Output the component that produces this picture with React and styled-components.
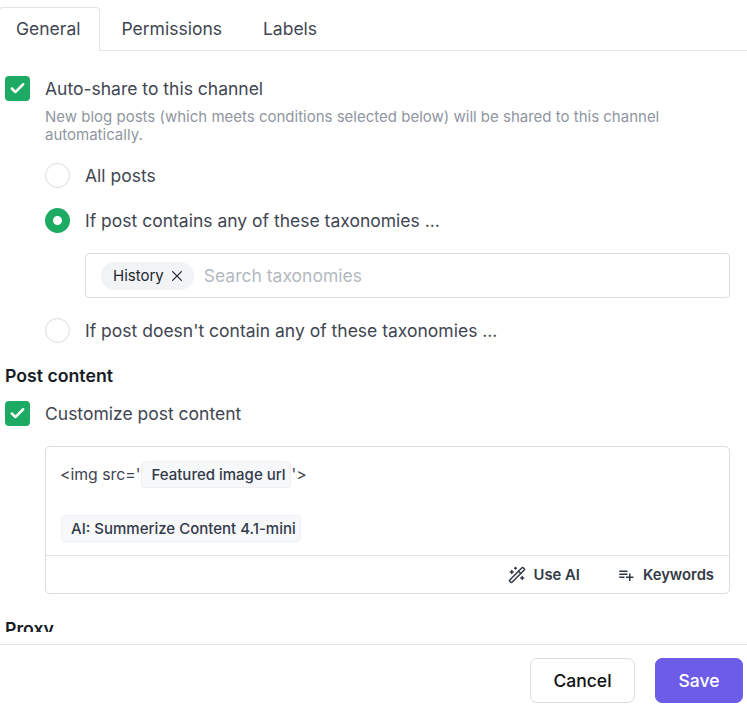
import React from "react";
import styled, { createGlobalStyle } from "styled-components";
import { Check, WandSparkles } from "lucide-react";
import { MdPlaylistAdd } from "react-icons/md";
import { IoCloseOutline } from "react-icons/io5";

const GlobalStyle = createGlobalStyle`
  html, body {
    margin: 0;
    padding: 0;
    height: 708px;
    overflow: hidden;
    background: #fff;
    font-family: Inter, "Liberation Sans", sans-serif;
  }
  * { box-sizing: border-box; }
`;

const Page = styled.div`
  display: flex;
  flex-direction: column;
  height: 708px;
`;

const Tabs = styled.div`
  display: flex;
  flex-shrink: 0;
  height: 51px;
  padding-top: 7px;
  border-bottom: 1px solid #e1e4e8;
`;

const Tab = styled.div`
  height: 44px;
  padding: 0 19px 0 ${({ $active }) => ($active ? "16px" : "20px")};
  margin-left: ${({ $active }) => ($active ? "-1px" : "0")};
  font-size: 17.5px;
  line-height: 42px;
  color: #3f4652;
  background: ${({ $active }) => ($active ? "#fff" : "transparent")};
  border: 1px solid ${({ $active }) => ($active ? "#e1e4e8" : "transparent")};
  border-bottom-color: ${({ $active }) => ($active ? "#fff" : "transparent")};
  border-radius: 4px 4px 0 0;
`;

const Content = styled.div`
  flex-shrink: 0;
  height: 581px;
  overflow: hidden;
  padding: 25px 17px 0 5px;
`;

const CheckRow = styled.div`
  display: flex;
  align-items: center;
  gap: 15px;
  height: 25px;
`;

const CheckBox = styled.span`
  display: flex;
  align-items: center;
  justify-content: center;
  width: 25px;
  height: 25px;
  border-radius: 4px;
  background: #1dab63;
  color: #fff;
`;

const Label = styled.span`
  font-size: 17.5px;
  color: #3f4652;
`;

const Description = styled.p`
  margin: 7px 0 0 40px;
  font-size: 15px;
  line-height: 18px;
  color: #8f96a1;
`;

const RadioList = styled.div`
  display: flex;
  flex-direction: column;
  margin: ${({ $top }) => $top}px 0 0 40px;
`;

const RadioRow = styled.div`
  display: flex;
  align-items: center;
  gap: 15px;
  height: 25px;
  margin-bottom: ${({ $gap }) => $gap}px;
`;

const Radio = styled.span`
  width: 25px;
  height: 25px;
  border-radius: 50%;
  background: #fff;
  border: ${({ $checked }) =>
    $checked ? "8px solid #1dab63" : "1px solid #d9dce1"};
`;

const TaxonomyInput = styled.div`
  display: flex;
  align-items: center;
  gap: 10px;
  height: 45px;
  margin: 0 0 20px 80px;
  padding: 0 15px;
  border: 1px solid #d9dce1;
  border-radius: 4px;
`;

const Chip = styled.span`
  display: flex;
  align-items: center;
  gap: 3px;
  height: 28px;
  padding: 0 7px 0 12px;
  border-radius: 14px;
  background: #f1f3f5;
  font-size: 15px;
  color: #1f2630;
`;

const Placeholder = styled.span`
  font-size: 17.5px;
  color: #b4b9c1;
`;

const SectionTitle = styled.h3`
  margin: ${({ $top }) => $top}px 0 ${({ $bottom }) => $bottom}px;
  font-size: 17.7px;
  line-height: 21px;
  font-weight: 600;
  color: #161c26;
`;

const Editor = styled.div`
  margin: 20px 0 0 40px;
  height: 148px;
  flex-shrink: 0;
  border: 1px solid #d9dce1;
  border-radius: 5px;
  display: flex;
  flex-direction: column;
`;

const EditorBody = styled.div`
  flex: 1;
  padding: 14px 14px 0;
  border-bottom: 1px solid #e1e4e8;
  font-size: 15.8px;
  color: #3f4652;
`;

const EditorLine = styled.div`
  display: flex;
  align-items: center;
  height: 27px;
  margin-bottom: ${({ $gap }) => $gap || 0}px;
`;

const Token = styled.span`
  display: inline-flex;
  align-items: center;
  height: 27px;
  padding: 0 4px 0 9px;
  margin: 0 1px;
  border: 1px solid #eef0f3;
  border-radius: 4px;
  background: #f7f8fa;
  font-size: 15px;
  font-weight: 500;
  color: #323a49;
`;

const EditorFooter = styled.div`
  display: flex;
  justify-content: flex-end;
  align-items: center;
  gap: 37px;
  height: 37px;
  padding-right: 15px;
`;

const FooterAction = styled.span`
  display: flex;
  align-items: center;
  gap: 8px;
  font-size: 14.8px;
  font-weight: 600;
  color: #333a45;

  svg {
    width: 18px;
    height: 18px;
  }
`;

const BottomBar = styled.div`
  display: flex;
  flex-shrink: 0;
  justify-content: flex-end;
  gap: 20px;
  height: 64px;
  margin-top: 12px;
  padding: 13px 4px 0 0;
  border-top: 1px solid #e1e4e8;
`;

const Button = styled.button`
  height: 45px;
  width: ${({ $width }) => $width}px;
  border-radius: 7px;
  border: 1px solid ${({ $primary }) => ($primary ? "#6c5ce7" : "#d9dce1")};
  background: ${({ $primary }) => ($primary ? "#6c5ce7" : "#fff")};
  color: ${({ $primary }) => ($primary ? "#fff" : "#111")};
  font-family: inherit;
  font-size: 17.5px;
  font-weight: 500;
`;

export default function App() {
  return (
    <Page>
      <GlobalStyle />
      <Tabs>
        <Tab $active>General</Tab>
        <Tab>Permissions</Tab>
        <Tab>Labels</Tab>
      </Tabs>
      <Content>
        <CheckRow>
          <CheckBox>
            <Check size={17} strokeWidth={3.5} />
          </CheckBox>
          <Label>Auto-share to this channel</Label>
        </CheckRow>
        <Description>
          New blog posts (which meets conditions selected below) will be shared
          to this channel automatically.
        </Description>
        <RadioList $top={19}>
          <RadioRow $gap={20}>
            <Radio />
            <Label>All posts</Label>
          </RadioRow>
          <RadioRow $gap={20}>
            <Radio $checked />
            <Label>If post contains any of these taxonomies ...</Label>
          </RadioRow>
        </RadioList>
        <TaxonomyInput>
          <Chip>
            History
            <IoCloseOutline size={20} />
          </Chip>
          <Placeholder>Search taxonomies</Placeholder>
        </TaxonomyInput>
        <RadioList $top={0}>
          <RadioRow $gap={0}>
            <Radio />
            <Label>If post doesn't contain any of these taxonomies ...</Label>
          </RadioRow>
        </RadioList>
        <SectionTitle $top={22} $bottom={15}>
          Post content
        </SectionTitle>
        <CheckRow>
          <CheckBox>
            <Check size={17} strokeWidth={3.5} />
          </CheckBox>
          <Label>Customize post content</Label>
        </CheckRow>
        <Editor>
          <EditorBody>
            <EditorLine $gap={27}>
              &lt;img src='
              <Token>Featured image url</Token>
              '&gt;
            </EditorLine>
            <EditorLine>
              <Token>AI: Summerize Content 4.1-mini</Token>
            </EditorLine>
          </EditorBody>
          <EditorFooter>
            <FooterAction>
              <WandSparkles />
              Use AI
            </FooterAction>
            <FooterAction>
              <MdPlaylistAdd />
              Keywords
            </FooterAction>
          </EditorFooter>
        </Editor>
        <SectionTitle $top={24} $bottom={13}>
          Proxy
        </SectionTitle>
      </Content>
      <BottomBar>
        <Button $width={105}>Cancel</Button>
        <Button $primary $width={88}>
          Save
        </Button>
      </BottomBar>
    </Page>
  );
}
